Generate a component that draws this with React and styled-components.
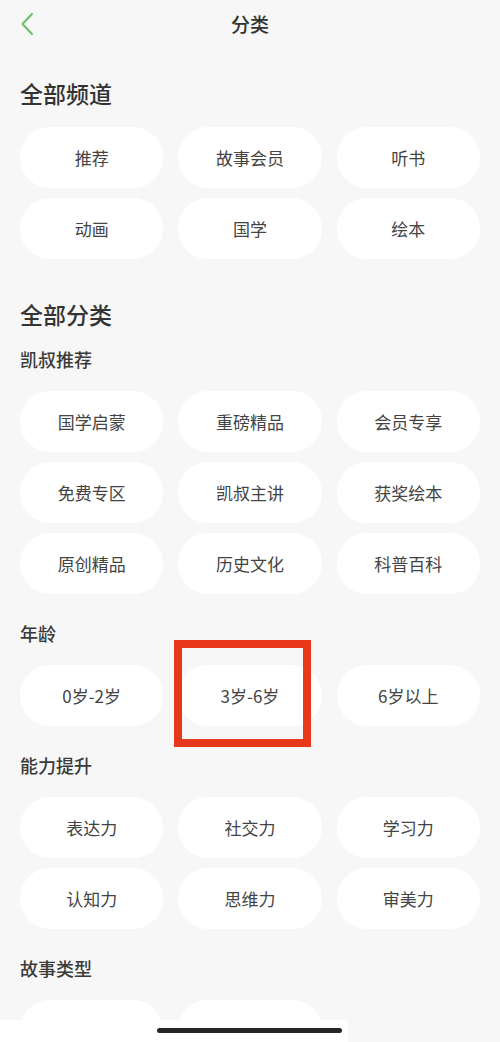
import React from 'react';
import styled, { createGlobalStyle } from 'styled-components';

const GlobalStyle = createGlobalStyle`
  html, body {
    margin: 0;
    padding: 0;
    background: #f7f7f7;
  }
  body {
    font-family: "Noto Sans CJK SC", "Noto Sans", sans-serif;
  }
`;

const channels = ['推荐', '故事会员', '听书', '动画', '国学', '绘本'];

// the last group is cut off by the bottom of the screen, its labels are not visible
const groups = [
  { title: '凯叔推荐', items: ['国学启蒙', '重磅精品', '会员专享', '免费专区', '凯叔主讲', '获奖绘本', '原创精品', '历史文化', '科普百科'] },
  { title: '年龄', items: ['0岁-2岁', '3岁-6岁', '6岁以上'] },
  { title: '能力提升', items: ['表达力', '社交力', '学习力', '认知力', '思维力', '审美力'] },
  { title: '故事类型', items: ['', ''] },
];

const App = () => (
  <Page>
    <GlobalStyle />
    <Header>
      <BackButton>
        <svg width="14" height="24" viewBox="0 0 14 24" fill="none">
          <path d="M12 2 L2.5 12 L12 22" stroke="#72bf6f" strokeWidth="2.2" strokeLinecap="round" strokeLinejoin="round" />
        </svg>
      </BackButton>
      <Title>分类</Title>
    </Header>

    <Content>
      <SectionTitle top={29} bottom={18}>全部频道</SectionTitle>
      <Grid>
        {channels.map(c => <Pill key={c}>{c}</Pill>)}
      </Grid>

      <SectionTitle top={39} bottom={17}>全部分类</SectionTitle>
      {groups.map((g, i) => (
        <div key={g.title}>
          <GroupTitle first={i === 0}>{g.title}</GroupTitle>
          <Grid>
            {g.items.map((item, j) => <Pill key={j}>{item}</Pill>)}
          </Grid>
        </div>
      ))}
    </Content>

    <Highlight />

    <BottomBar>
      <HomeIndicator />
    </BottomBar>
  </Page>
);

export default App;

const Page = styled.div`
  position: relative;
  width: 500px;
  height: 1042px;
  overflow: hidden;
  background: #f7f7f7;
`;

const Header = styled.div`
  position: relative;
  height: 48px;
  display: flex;
  align-items: center;
  justify-content: center;
`;

const BackButton = styled.div`
  position: absolute;
  left: 20px;
  top: 12px;
  display: flex;
`;

const Title = styled.div`
  font-size: 19px;
  line-height: 28px;
  color: #333;
  font-weight: 500;
`;

const Content = styled.div`
  padding: 0 20px;
`;

const SectionTitle = styled.div`
  margin-top: ${p => p.top}px;
  margin-bottom: ${p => p.bottom}px;
  font-size: 23px;
  line-height: 32px;
  font-weight: 500;
  color: #333;
`;

const GroupTitle = styled.div`
  margin-top: ${p => (p.first ? 0 : 27)}px;
  margin-bottom: 20px;
  font-size: 18px;
  line-height: 24px;
  font-weight: 500;
  color: #3a3a3a;
`;

const Grid = styled.div`
  display: grid;
  grid-template-columns: repeat(3, 1fr);
  column-gap: 15px;
  row-gap: 10px;
`;

const Pill = styled.div`
  height: 61px;
  border-radius: 30px;
  background: #fff;
  display: flex;
  align-items: center;
  justify-content: center;
  font-size: 17px;
  color: #444;
`;

const Highlight = styled.div`
  position: absolute;
  left: 174px;
  top: 640px;
  width: 137px;
  height: 107px;
  box-sizing: border-box;
  border: 8px solid #e8381c;
`;

const BottomBar = styled.div`
  position: absolute;
  left: 0;
  bottom: 0;
  width: 348px;
  height: 22px;
  background: #fff;
`;

const HomeIndicator = styled.div`
  position: absolute;
  left: 157px;
  top: 8px;
  width: 185px;
  height: 5px;
  border-radius: 3px;
  background: #262626;
`;
